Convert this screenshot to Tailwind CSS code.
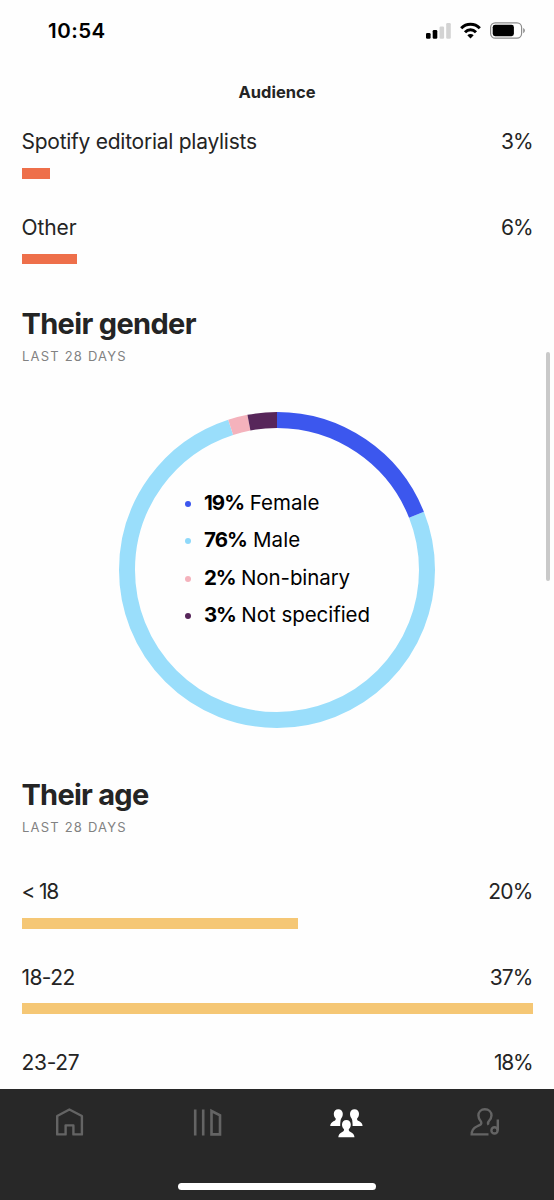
<!DOCTYPE html>
<html lang="en">

<head>
    <meta charset="UTF-8">
    <meta name="viewport" content="width=device-width, initial-scale=1.0">
    <title>Audience</title>
    <script src="https://cdn.jsdelivr.net/npm/@tailwindcss/browser@4"></script>
</head>

<body class="bg-white">
    <div class="relative flex h-[1200px] w-[554px] flex-col overflow-hidden bg-[#fefefe] font-['Inter','Liberation_Sans',sans-serif] text-[#242424]">

        <!-- status bar -->
        <div class="flex h-[62px] shrink-0 items-center justify-between pl-[48px] pr-[28px] text-black">
            <span class="text-[20.5px] font-semibold tracking-[0.5px]">10:54</span>
            <div class="-mt-[1px] flex items-center gap-[9px]">
                <svg class="h-[17px] w-[26px]" viewBox="0 0 26 17">
                    <rect x="1" y="11" width="4.6" height="5.8" rx="1.3" fill="#000" />
                    <rect x="7.7" y="8" width="4.6" height="8.8" rx="1.3" fill="#000" />
                    <rect x="14.5" y="4.5" width="4.6" height="12.3" rx="1.3" fill="#d3d3d3" />
                    <rect x="21.2" y="1" width="4.6" height="15.8" rx="1.3" fill="#d3d3d3" />
                </svg>
                <svg class="h-[17px] w-[21px]" viewBox="0 0 21 17" fill="none" stroke="#000" stroke-width="3">
                    <path d="M1.2 6.2C6.4 1 14.6 1 19.8 6.2" />
                    <path d="M5 10.2C8.2 7 12.8 7 16 10.2" />
                    <path d="M10.5 16.4L7.3 13.2C9.2 11.6 11.8 11.6 13.7 13.2Z" fill="#000" stroke="none" />
                </svg>
                <svg class="h-[17px] w-[36px]" viewBox="0 0 36 17">
                    <rect x="0.6" y="0.8" width="31" height="15.4" rx="4.6" fill="none" stroke="#8c8c8c" stroke-width="1.2" />
                    <rect x="2.7" y="2.8" width="21.2" height="11.4" rx="2.4" fill="#000" />
                    <path d="M33.2 6v5.2c1-.4 1.7-1.4 1.7-2.6s-.7-2.2-1.7-2.6z" fill="#8c8c8c" />
                </svg>
            </div>
        </div>

        <div class="flex h-[58px] shrink-0 items-center justify-center pt-[2px]">
            <h1 class="text-[16.5px] font-bold">Audience</h1>
        </div>

        <!-- playlist sources -->
        <div class="shrink-0 px-[21.5px]">
            <div class="h-[85.6px]">
                <div class="flex h-[44px] items-center justify-between text-[21px]">
                    <span class="tracking-[-0.26px]">Spotify editorial playlists</span>
                    <span class="tracking-[-1.1px]">3%</span>
                </div>
                <div class="mt-1 h-[10.5px] w-[28px] bg-[#ee6f4a]"></div>
            </div>
            <div class="h-[85.6px]">
                <div class="flex h-[44px] items-center justify-between text-[21px]">
                    <span class="tracking-[-0.1px]">Other</span>
                    <span class="tracking-[-1.1px]">6%</span>
                </div>
                <div class="mt-1 h-[10.5px] w-[55.5px] bg-[#ee6f4a]"></div>
            </div>
        </div>

        <!-- gender -->
        <div class="h-[120.8px] shrink-0 px-[21.5px] pt-[13px]">
            <h2 class="text-[29px] leading-[40px] font-bold tracking-[-0.66px]">Their gender</h2>
            <p class="pt-[2px] pl-[0.5px] text-[13px] leading-[20px] tracking-[1.2px] text-[#828282]">LAST 28 DAYS</p>
        </div>
        <div class="relative mx-auto h-[316px] w-[316px] shrink-0">
            <svg class="h-full w-full" viewBox="0 0 316 316">
                <g transform="rotate(-90 158 158)" fill="none" stroke-width="16">
                    <circle cx="158" cy="158" r="150" pathLength="100" stroke="#9adefb" stroke-dasharray="76 24" stroke-dashoffset="-19" />
                    <circle cx="158" cy="158" r="150" pathLength="100" stroke="#3c57ee" stroke-dasharray="19 81" />
                    <circle cx="158" cy="158" r="150" pathLength="100" stroke="#f4b2bc" stroke-dasharray="2 98" stroke-dashoffset="-95" />
                    <circle cx="158" cy="158" r="150" pathLength="100" stroke="#57265a" stroke-dasharray="3 97" stroke-dashoffset="-97" />
                </g>
            </svg>
            <ul class="absolute top-[72px] left-[66px] text-[20.5px] leading-[37.5px] whitespace-nowrap text-black">
                <li class="flex items-center gap-[13px]"><i class="mt-[2px] size-[6px] rounded-full bg-[#3c57ee]"></i><span><b class="tracking-[-1px]">19%</b> Female</span></li>
                <li class="flex items-center gap-[13px]"><i class="mt-[2px] size-[6px] rounded-full bg-[#8fd9fa]"></i><span class="tracking-[0.1px]"><b class="tracking-[-0.9px]">76%</b> Male</span></li>
                <li class="flex items-center gap-[13px]"><i class="mt-[2px] size-[6px] rounded-full bg-[#f4b2bc]"></i><span class="tracking-[-0.1px]"><b class="tracking-[-1.2px]">2%</b> Non-binary</span></li>
                <li class="flex items-center gap-[13px]"><i class="mt-[2px] size-[6px] rounded-full bg-[#57265a]"></i><span class="tracking-[-0.05px]"><b class="tracking-[-1.2px]">3%</b> Not specified</span></li>
            </ul>
        </div>

        <!-- age -->
        <div class="h-[141.8px] shrink-0 px-[21.5px] pt-[47px]">
            <h2 class="text-[29px] leading-[40px] font-bold tracking-[-0.75px]">Their age</h2>
            <p class="pt-[2px] pl-[0.5px] text-[13px] leading-[20px] tracking-[1.2px] text-[#828282]">LAST 28 DAYS</p>
        </div>
        <div class="min-h-0 flex-1 overflow-hidden px-[21.5px]">
            <div class="h-[85.6px]">
                <div class="flex h-[44px] items-center justify-between text-[21px]">
                    <span class="tracking-[-1.2px]">&lt; 18</span>
                    <span class="tracking-[-0.8px]">20%</span>
                </div>
                <div class="mt-1 h-[11px] w-[276px] bg-[#f5c775]"></div>
            </div>
            <div class="h-[85.6px]">
                <div class="flex h-[44px] items-center justify-between text-[21px]">
                    <span class="tracking-[-0.6px]">18-22</span>
                    <span class="tracking-[-0.9px]">37%</span>
                </div>
                <div class="mt-1 h-[11px] bg-[#f5c775]"></div>
            </div>
            <div class="flex h-[44px] items-center justify-between text-[21px]">
                <span class="tracking-[-0.3px]">23-27</span>
                <span class="tracking-[-1.2px]">18%</span>
            </div>
        </div>

        <!-- tab bar -->
        <nav class="flex h-[111.5px] shrink-0 flex-col items-center justify-between bg-[#282828] pt-[17px] pb-[10.5px]">
            <div class="grid w-full grid-cols-4 justify-items-center text-[#646464]">
                <svg class="h-[32px] w-[36px]" viewBox="0 0 36 32" fill="none" stroke="currentColor" stroke-width="2.4">
                    <path d="M6.2 28.4V10L18.4 3.5 30.9 10v18.4h-8.5v-9h-7.8v9z" stroke-linejoin="round" />
                </svg>
                <svg class="h-[32px] w-[36px]" viewBox="0 0 36 32" fill="none" stroke="currentColor" stroke-width="2.6">
                    <path d="M5.2 3.5v26M13.2 3.5v26M21.5 5v23.4h8.5V9.4z" />
                </svg>
                <svg class="h-[32px] w-[36px]" viewBox="0 0 36 32" fill="#fff">
                    <path d="M10.3 3.2c-2.600 0-4.500 2-4.500 4.600 0 2 .7 3.500 1.900 4.600.3 1.300-.4 2-1.800 2.700-2.100 1.100-3.500 2.400-3.700 4.900h10c0-1.600 0-2.300.2-4 0-1.500.3-2.600.8-3.600.9-1 1.600-2.600 1.600-4.600 0-2.600-1.900-4.600-4.500-4.600z" />
                    <path d="M26.500 3.2c2.600 0 4.500 2 4.500 4.600 0 2-.7 3.500-1.900 4.600-.3 1.300.4 2 1.800 2.700 2.100 1.100 3.500 2.400 3.700 4.900h-10c0-1.600 0-2.300-.2-4 0-1.500-.3-2.600-.8-3.600-.9-1-1.600-2.600-1.600-4.600 0-2.600 1.900-4.600 4.500-4.600z" />
                    <path d="M18.400 14.100c-2.600 0-4.400 2-4.400 4.500 0 2 .8 3.500 2 4.600.3 1.300-.4 2-1.800 2.700-2.300 1.100-3.700 2.600-3.900 5.300h16.200c-.2-2.700-1.600-4.200-3.900-5.300-1.400-.7-2.100-1.400-1.800-2.700 1.200-1.100 2-2.600 2-4.600 0-2.500-1.800-4.500-4.400-4.500z" stroke="#282828" stroke-width="2" paint-order="stroke" />
                </svg>
                <svg class="h-[32px] w-[36px]" viewBox="0 0 36 32" fill="none" stroke="currentColor" stroke-width="2.4">
                    <path d="M21.5 28.4H4.700c0-4.200 1.500-6.300 5-7.900l3.300-1.600c1.500-.8 1.700-2.300.7-3.700-1.400-1.800-2.300-3.400-2.300-5.700 0-3.700 2.700-6.200 6.500-6.200s6.600 2.500 6.600 6.200c0 2.300-1.100 4-2.700 5.700-1 1.200-1.100 2.400-.2 3.600" />
                    <circle cx="27.5" cy="24.4" r="3.100" />
                    <path d="M30.800 24.400V13.500" />
                </svg>
            </div>
            <div class="h-[7px] w-[198px] rounded-full bg-white"></div>
        </nav>

        <!-- scroll thumb -->
        <div class="absolute top-[352px] right-[4px] h-[229px] w-[4px] rounded-full bg-[#c9c9c9]"></div>
    </div>
</body>

</html>
